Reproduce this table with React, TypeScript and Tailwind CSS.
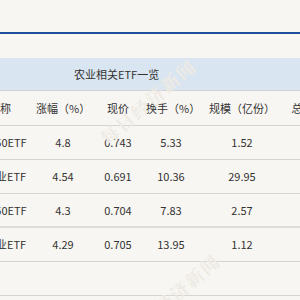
const rows = [
  { name: '农业50ETF', chg: '4.8', price: '0.743', turn: '5.33', size: '1.52', line: 'border-b border-[#d8d5d0]' },
  { name: '大农业ETF', chg: '4.54', price: '0.691', turn: '10.36', size: '29.95', line: 'border-b border-[#d8d5d0]' },
  { name: '畜牧50ETF', chg: '4.3', price: '0.704', turn: '7.83', size: '2.57', line: 'border-b-2 border-[#e0ddd8]' },
  { name: '养殖业ETF', chg: '4.29', price: '0.705', turn: '13.95', size: '1.12', line: 'border-b border-[#d8d5d0]' },
];

const Cells = ({ cells }: { cells: string[] }) => (
  <>
    <div className="w-[72px] shrink-0 text-center">{cells[0]}</div>
    <div className="w-[54px] shrink-0 text-center">{cells[1]}</div>
    <div className="w-[56px] shrink-0 text-center">{cells[2]}</div>
    <div className="w-[50px] shrink-0 text-center">{cells[3]}</div>
    <div className="w-[92px] shrink-0 text-center">{cells[4]}</div>
    <div className="w-[84px] shrink-0 text-center">{cells[5]}</div>
  </>
);

// faint diagonal watermark laid over the table
const Watermark = ({ className }: { className: string }) => (
  <div
    aria-hidden
    className={`pointer-events-none absolute text-[18px] font-bold tracking-[2px] text-[#eeeae4] -rotate-[41deg] whitespace-nowrap ${className}`}
    style={{ fontFamily: '"Noto Serif CJK SC", "Noto Sans CJK SC", serif' }}
  >
    每日经济新闻
  </div>
);

export default function App() {
  return (
    <div
      className="relative w-[300px] h-[300px] overflow-hidden bg-[#f8f6f2] text-[11px] text-[#333]"
      style={{ fontFamily: '"Noto Sans CJK SC", "Noto Sans", sans-serif' }}
    >
      <div className="h-[34px] border-b-2 border-[#1f4f9c]" />
      <div className="h-[24px]" />
      <div className="h-[33px] bg-[#d9e5f0] border-b border-[#d3d3d3] flex items-center pl-[74px]">
        农业相关ETF一览
      </div>
      <div className="ml-[-36px] w-[408px]">
        <div className="h-[35px] flex items-center border-b border-[#d8d5d0]">
          <Cells cells={['名称', '涨幅（%）', '现价', '换手（%）', '规模（亿份）', '总市值（亿元）']} />
        </div>
        {rows.map((r) => (
          <div key={r.name} className={`h-[34px] flex items-center ${r.line}`}>
            <Cells cells={[r.name, r.chg, r.price, r.turn, r.size, '']} />
          </div>
        ))}
        <div className="h-[34px] border-b border-[#d8d5d0]" />
      </div>
      <Watermark className="left-[88px] top-[88px]" />
      <Watermark className="left-[112px] top-[283px]" />
    </div>
  );
}
